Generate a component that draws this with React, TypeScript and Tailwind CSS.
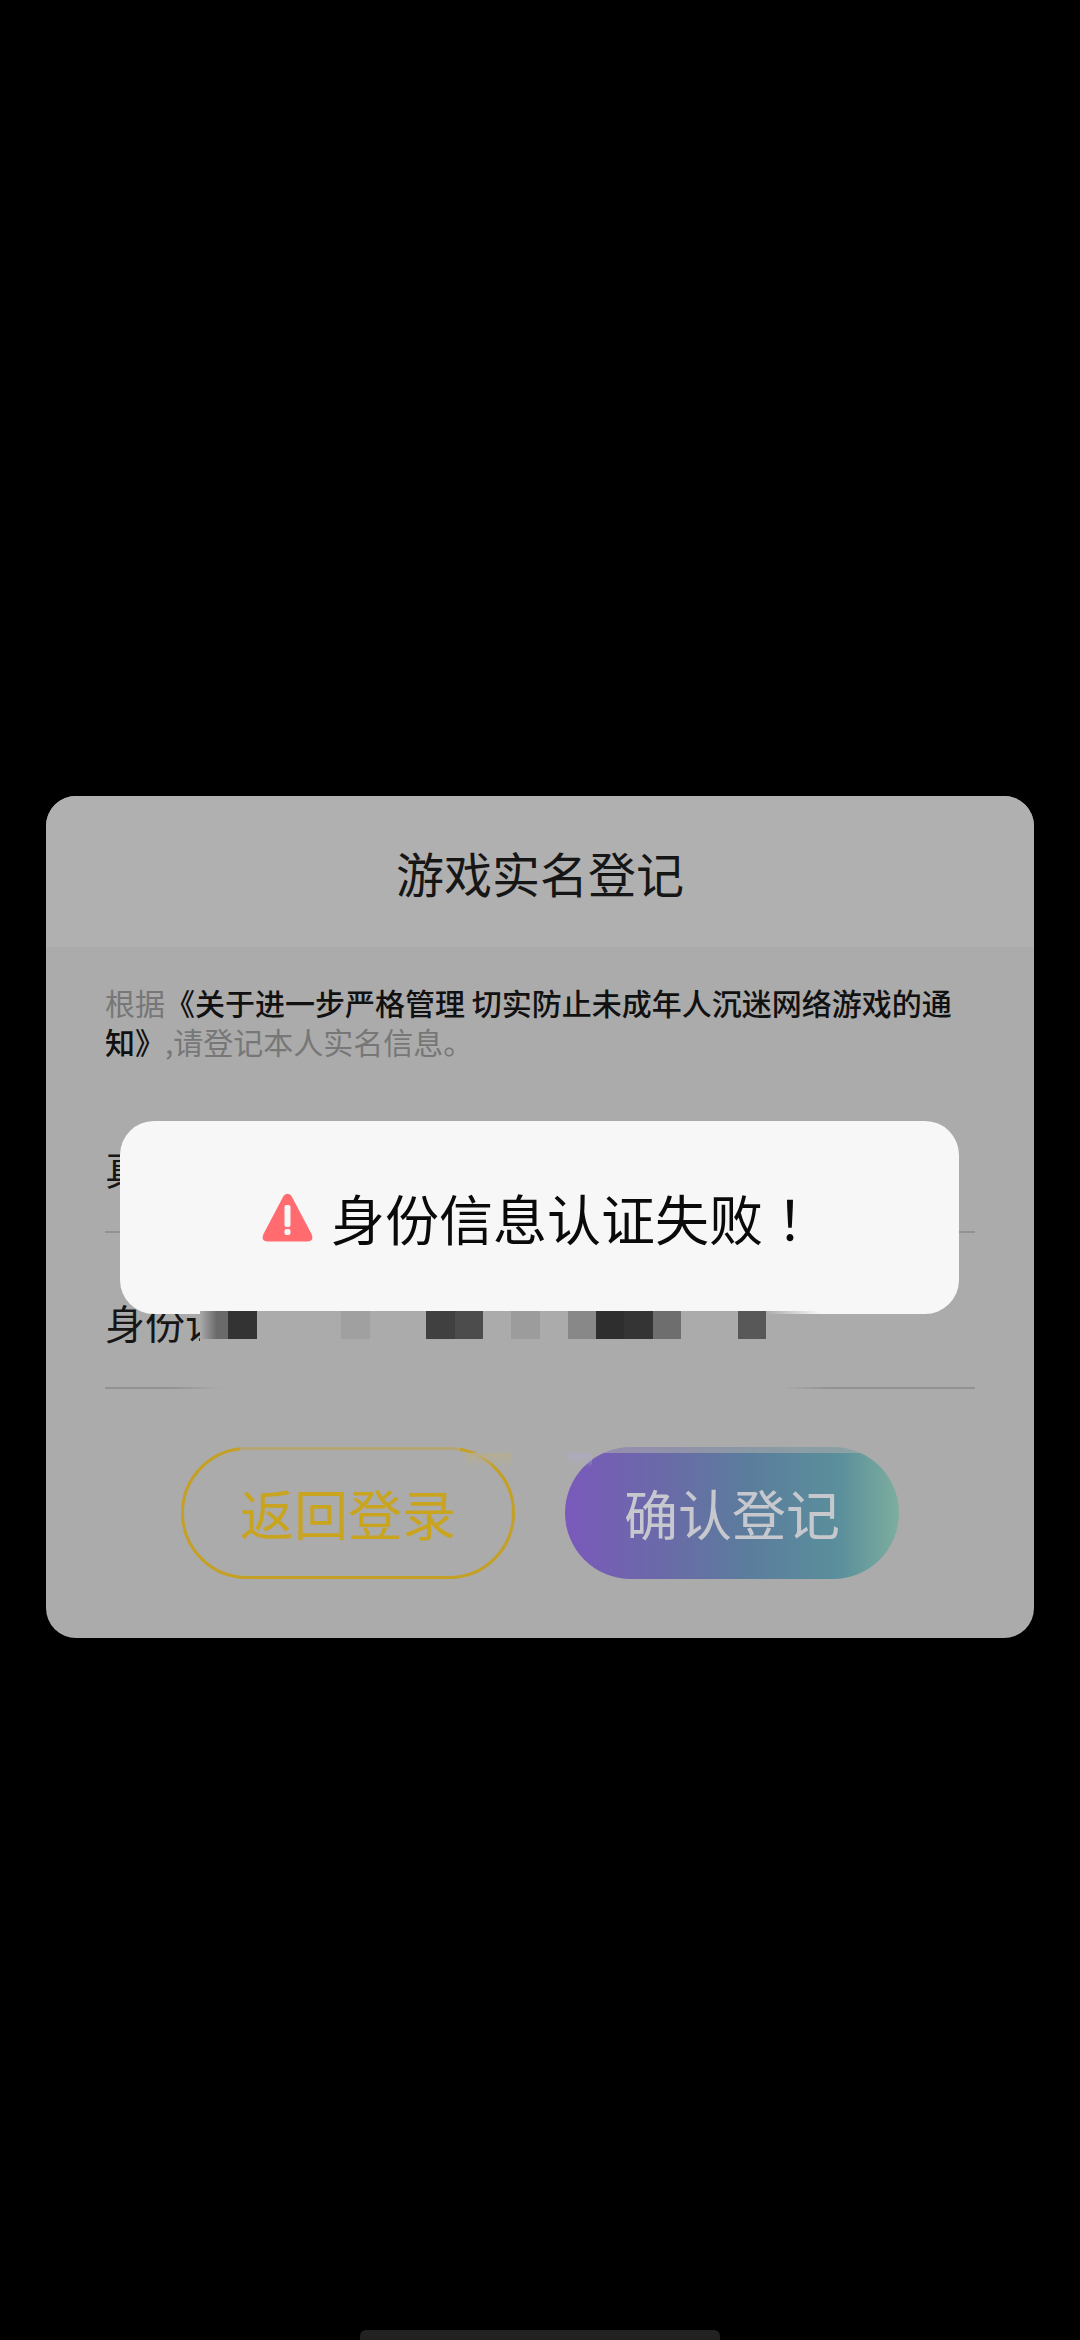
const cells = [
  'bg-[linear-gradient(90deg,transparent,#6a6a6a_60%)]',
  'bg-[#333333]',
  'bg-transparent',
  'bg-transparent',
  'bg-transparent',
  'bg-[#a0a0a0]',
  'bg-transparent',
  'bg-transparent',
  'bg-[#404040]',
  'bg-[#4c4c4c]',
  'bg-transparent',
  'bg-[#9c9c9c]',
  'bg-transparent',
  'bg-[#888888]',
  'bg-[#2e2e2e]',
  'bg-[#343434]',
  'bg-[#6e6e6e]',
  'bg-transparent',
  'bg-transparent',
  'bg-[#585858]',
]

function WarningIcon() {
  return (
    <svg viewBox="0 0 51 49" className="h-[49px] w-[51px] shrink-0">
      <path
        d="M21.5 3 Q25.5 -1.5 29.5 3 L49.5 41 Q52.5 48.5 45 48.5 L6 48.5 Q-1.5 48.5 1.5 41 Z"
        fill="#ff6b6f"
      />
      <rect x="22.5" y="12" width="6" height="22" rx="2" fill="#f7f7f7" />
      <rect x="22.5" y="36" width="6" height="6" rx="2" fill="#f7f7f7" />
    </svg>
  )
}

export default function App() {
  return (
    <div
      className="relative flex h-[2340px] w-[1080px] flex-col overflow-hidden bg-black pt-[796px]"
      style={{ fontFamily: '"Noto Sans CJK SC", "Noto Sans", sans-serif' }}
    >
      <section className="mx-[46px] h-[842px] overflow-hidden rounded-[30px] bg-[#ababab]">
        <header className="flex h-[151px] items-center justify-center bg-[#b0b0b0]">
          <h1 className="text-[48px] leading-none font-normal text-[#161616]">游戏实名登记</h1>
        </header>

        <p className="mt-[36px] px-[59px] text-[30px] leading-[39px] text-[#777777]">
          根据
          <span className="font-medium text-[#111111]">《关于进一步严格管理 切实防止未成年人沉迷网络游戏的通知》</span>
          ,请登记本人实名信息。
        </p>

        <div className="mx-[59px] mt-[65px] flex h-[107px] border-b-2 border-[#929292] pt-[22px] text-[40px] leading-none text-[#161616]">
          <span>真实姓名</span>
        </div>

        <div className="mx-[59px] flex h-[156px] border-b-2 border-[#929292] pt-[69px] text-[40px] leading-none text-[#161616]">
          <span className="w-[95px] shrink-0 overflow-hidden whitespace-nowrap">身份证号</span>
        </div>

        <div className="mt-[58px] flex justify-center gap-[50px]">
          <button className="h-[132px] w-[334px] rounded-[66px] border-[3px] border-[#c4a024] text-[54px] leading-none text-[#c9a41f]">
            返回登录
          </button>
          <button className="h-[132px] w-[334px] rounded-[66px] bg-[linear-gradient(90deg,#7a59bb_0%,#6a6aa8_30%,#5b7d9c_55%,#5a8f9c_82%,#7dae9e_100%)] text-[54px] leading-none text-[#c6c8ce]">
            确认登记
          </button>
        </div>
      </section>

      <div className="absolute top-[1121px] left-[120px] z-10 flex h-[193px] w-[839px] items-center justify-center gap-[18px] rounded-[34px] bg-[#f7f7f7]">
        <WarningIcon />
        <span className="text-[54px] leading-none text-[#0a0a0a]">
          身份信息认证失败<span className="font-['Noto_Sans_CJK_TC']">！</span>
        </span>
      </div>

      {/* censored id number, it also cuts through the toast bottom */}
      <div className="absolute top-[1311px] left-[200px] z-20 flex h-[28px]">
        <div className="flex bg-[#ababab]">
          {cells.map((cell, index) => (
            <div key={index} className={`h-full w-[28.3px] ${cell}`} />
          ))}
        </div>
        <div className="h-[3px] w-[54px] bg-gradient-to-r from-[#ababab] to-transparent" />
      </div>

      {/* leftovers of the censor blur over the divider and button tops */}
      <div className="absolute top-[1382px] left-[170px] z-20 h-[10px] w-[660px] bg-[linear-gradient(90deg,transparent,#ababab_8%,#ababab_93%,transparent)]" />
      <div className="absolute top-[1446px] left-[240px] z-20 h-[5px] w-[220px] bg-[#ababab]/60" />
      <div className="absolute top-[1446px] left-[590px] z-20 h-[7px] w-[270px] bg-[#ababab]/60" />
      <div className="absolute top-[1453px] left-[465px] z-20 h-[14px] w-[46px] bg-gradient-to-b from-[#b5ad92] to-transparent" />
      <div className="absolute top-[1453px] left-[568px] z-20 h-[14px] w-[24px] bg-gradient-to-b from-[#aeaabf] to-transparent" />

      <div className="mx-auto mt-auto h-[10px] w-[360px] rounded-t-[6px] bg-[#222222]" />
    </div>
  )
}
